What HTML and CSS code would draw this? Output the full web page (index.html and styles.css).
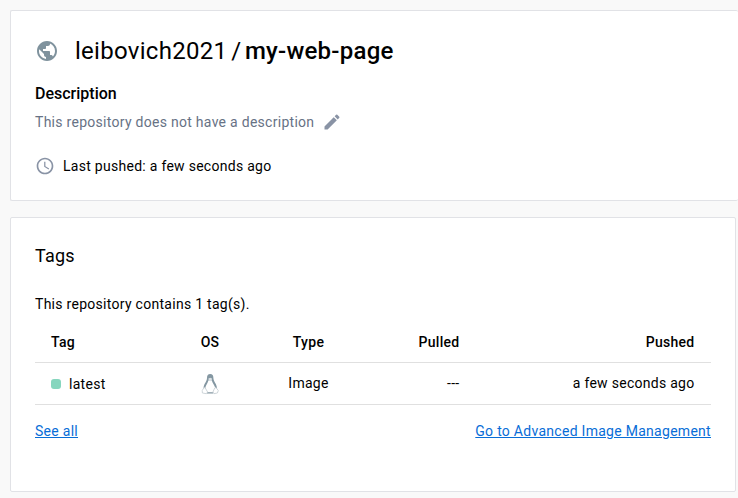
FILE: index.html
```html
<!DOCTYPE html>
<html lang="en">
<head>
<meta charset="utf-8">
<title>leibovich2021/my-web-page</title>
<link rel="stylesheet" href="styles.css">
</head>
<body>
<section class="card summary">
  <h1 class="title"><svg class="globe" viewBox="0 0 24 24"><path d="M12 2C6.48 2 2 6.48 2 12s4.480 10 10 10 10-4.480 10-10S17.520 2 12 2zm-1 17.930c-3.950-.490-7-3.850-7-7.930 0-.620.080-1.210.210-1.790L9 15v1c0 1.100.9 2 2 2v1.930zm6.900-2.540c-.260-.810-1-1.390-1.900-1.390h-1v-3c0-.550-.450-1-1-1H8v-2h2c.550 0 1-.450 1-1V7h2c1.100 0 2-.9 2-2v-.410c2.930 1.190 5 4.060 5 7.410 0 2.080-.8 3.970-2.100 5.390z"/></svg><span class="owner">leibovich2021</span><span class="slash">/</span><strong>my-web-page</strong></h1>
  <h2 class="label">Description</h2>
  <p class="description">This repository does not have a description<svg class="pencil" viewBox="0 0 24 24"><path d="M3 17.250V21h3.750L17.810 9.940l-3.750-3.750L3 17.250zM20.710 7.040a1 1 0 0 0 0-1.410l-2.340-2.340a1 1 0 0 0-1.410 0l-1.830 1.830 3.750 3.750 1.830-1.830z"/></svg></p>
  <p class="pushed"><svg class="clock" viewBox="0 0 24 24"><path d="M11.990 2C6.470 2 2 6.480 2 12s4.470 10 9.990 10C17.520 22 22 17.520 22 12S17.520 2 11.990 2zM12 20c-4.420 0-8-3.580-8-8s3.580-8 8-8 8 3.580 8 8-3.580 8-8 8zm.5-13H11v6l5.250 3.150.750-1.230-4.500-2.670V7z"/></svg>Last pushed: a few seconds ago</p>
</section>
<section class="card tags">
  <h2 class="heading">Tags</h2>
  <p class="count">This repository contains 1 tag(s).</p>
  <table class="table">
    <thead><tr><th class="c-tag">Tag</th><th class="c-os">OS</th><th class="c-type">Type</th><th class="c-pulled">Pulled</th><th class="c-pushed">Pushed</th></tr></thead>
    <tbody><tr><td class="c-tag"><span class="tag"><i class="status"></i>latest</span></td><td class="c-os"><svg class="linux" viewBox="0 0 20 22"><path class="body" d="M7 5C7 2.200 8 1 10.200 1S13.400 2.200 13.400 5c0 3.500 3.600 6 3.600 10.500L13 20.500H7l-3.500-5C3.500 11 7 8.500 7 5z"/><path class="belly" d="M8.300 7.500h3.600c.4 3 3.300 4.700 3.400 8.500l-2.300 3.300H7.500L5.300 16c0-3.800 2.600-5.500 3-8.500z"/><path class="face" d="M8.400 5.500l1.800-.8 1.800.8-.3 2-1.500.8-1.500-.8z"/><path class="foot" d="M4 14.600l1.300.4 2.300 4-1.200 1.700-4-.7-.2-2.500zM16 14.600l-1.300.4-1.800 4 1 1.700 3.500-.7.9-2.500z"/></svg></td><td class="c-type">Image</td><td class="c-pulled">---</td><td class="c-pushed">a few seconds ago</td></tr></tbody>
  </table>
  <div class="links"><a href="#">See all</a><a href="#">Go to Advanced Image Management</a></div>
</section>
</body>
</html>
```
FILE: styles.css
```css
* { box-sizing: border-box; }
body { margin: 0; padding: 10px 0 0 10px; height: 498px; overflow: hidden; background: #f9f9f9; color: #000; font: 14px/20px Roboto, sans-serif; letter-spacing: .28px; }
h1, h2, p { margin: 0; }
svg { display: block; flex: none; fill: #8993a5; }
.card { background: #fff; border: 1px solid #e1e2e6; border-radius: 2px; }
.summary { height: 191px; border-right: 0; padding: 24px; }
.title { display: flex; align-items: center; height: 32px; font-size: 24px; font-weight: 400; letter-spacing: .28px; }
.title strong { font-weight: 500; letter-spacing: .24px; }
.globe { width: 24px; height: 24px; margin-right: 16px; fill: #7f929d; }
.slash { margin: 0 3.500px 0 4px; }
.label { margin-top: 17px; font-size: 16px; line-height: 20px; font-weight: 500; letter-spacing: 0; }
.description { display: flex; align-items: center; margin-top: 8px; color: #677285; }
.pencil { width: 20px; height: 20px; margin-left: 8px; }
.pushed { display: flex; align-items: center; margin-top: 24px; }
.clock { width: 20px; height: 20px; margin-right: 8px; }
.tags { width: 726px; height: 275px; margin-top: 16px; padding: 24px; }
.heading { height: 28px; font-size: 18px; line-height: 28px; font-weight: 400; letter-spacing: .2px; }
.count { margin-top: 24px; }
.table { width: 676px; margin-top: 7px; table-layout: fixed; border-collapse: collapse; }
.table th, .table td { height: 42px; padding: 0 16px; border-bottom: 1px solid #e0e0e0; text-align: left; white-space: nowrap; }
.table th { height: 41px; padding-top: 1px; font-weight: 500; }
.table .c-tag { width: 150px; }
.table .c-os { width: 50px; padding-left: 0; padding-right: 0; text-align: center; }
.table .c-type { width: 146px; padding-left: 1px; padding-right: 0; text-align: center; }
.table .c-pulled { width: 95px; text-align: right; }
.table .c-pushed { text-align: right; }
.table .c-pulled, .table .c-pushed { padding-right: 16.500px; }
.tag { display: flex; align-items: center; padding-top: 1px; }
.status { width: 10px; height: 10px; margin-right: 8px; border-radius: 3px; background: #86d6be; }
.linux { width: 20px; height: 22px; margin: 1px auto 0; }
.linux .body { fill: #8497a2; }
.linux .belly { fill: #fff; }
.linux .face { fill: #dce2e5; }
.linux .foot { fill: #fff; stroke: #c3ccd1; stroke-width: .8; }
.links { display: flex; justify-content: space-between; margin-top: 16px; }
.links a { color: #086dd7; }
```
